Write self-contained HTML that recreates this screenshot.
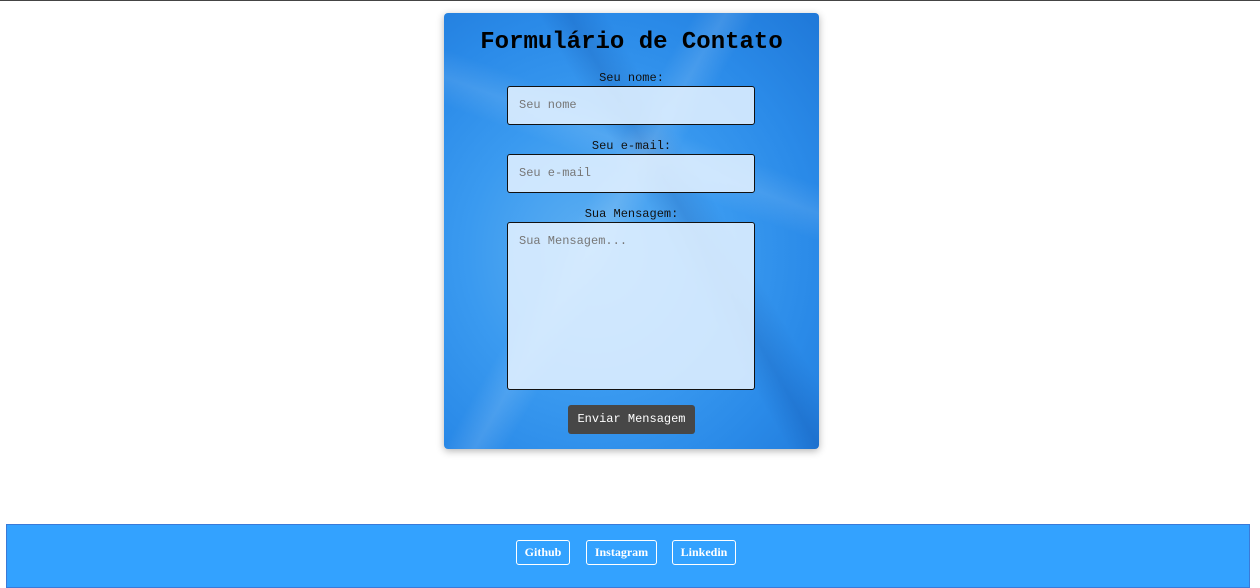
<!DOCTYPE html>
<html><head><meta charset="utf-8"><style>
body{margin:0;width:1260px;height:588px;background:#fff;position:relative;overflow:hidden;font-family:"Liberation Mono",monospace}
.top{position:absolute;left:0;top:0;width:100%;height:1px;background:#444}
.card{position:absolute;left:444px;top:13px;width:375px;height:436px;border-radius:4px;box-shadow:0 2px 8px rgba(0,0,0,.3);
background:radial-gradient(ellipse at 40% 55%,#5fb0f2 0%,#3a9af0 40%,#2a8ae8 70%,#1f78d8 100%);overflow:hidden}
.card:before{content:"";position:absolute;inset:0;background:
linear-gradient(120deg,transparent 40%,rgba(255,255,255,.12) 45%,transparent 50%),
linear-gradient(60deg,transparent 55%,rgba(0,40,120,.15) 60%,transparent 66%),
linear-gradient(200deg,transparent 30%,rgba(255,255,255,.1) 35%,transparent 40%)}
h1{position:absolute;top:16px;left:0;width:100%;margin:0;text-align:center;font-size:24px;font-weight:bold;color:#000;line-height:28px}
.l{position:absolute;left:0;width:100%;text-align:center;font-size:12px;color:#111;line-height:14px}
.in{position:absolute;left:63px;width:248px;background:rgba(225,240,255,.88);border:1px solid #111;border-radius:3px;box-sizing:border-box;font-size:12px;color:#777;padding:11px 11px}
.btn{position:absolute;left:124px;top:392px;width:127px;height:29px;background:#474747;border-radius:3px;color:#fff;font-size:12px;line-height:28px;text-align:center}
footer{position:absolute;left:6px;top:524px;width:1244px;height:64px;background:#33a2ff;border:1px solid #3a7ad8;box-sizing:border-box}
.f{position:absolute;top:15px;height:25px;border:1px solid #fff;border-radius:3px;color:#fff;font-family:"Liberation Serif",serif;font-weight:bold;font-size:12px;line-height:23px;text-align:center;box-sizing:border-box}
</style></head><body>
<div class="top"></div>
<div class="card">
<h1>Formulário de Contato</h1>
<div class="l" style="top:58px">Seu nome:</div>
<div class="in" style="top:73px;height:39px">Seu nome</div>
<div class="l" style="top:126px">Seu e-mail:</div>
<div class="in" style="top:141px;height:39px">Seu e-mail</div>
<div class="l" style="top:194px">Sua Mensagem:</div>
<div class="in" style="top:209px;height:168px">Sua Mensagem...</div>
<div class="btn">Enviar Mensagem</div>
</div>
<footer>
<div class="f" style="left:509px;width:54px">Github</div>
<div class="f" style="left:579px;width:71px">Instagram</div>
<div class="f" style="left:665px;width:64px">Linkedin</div>
</footer>
</body></html>
